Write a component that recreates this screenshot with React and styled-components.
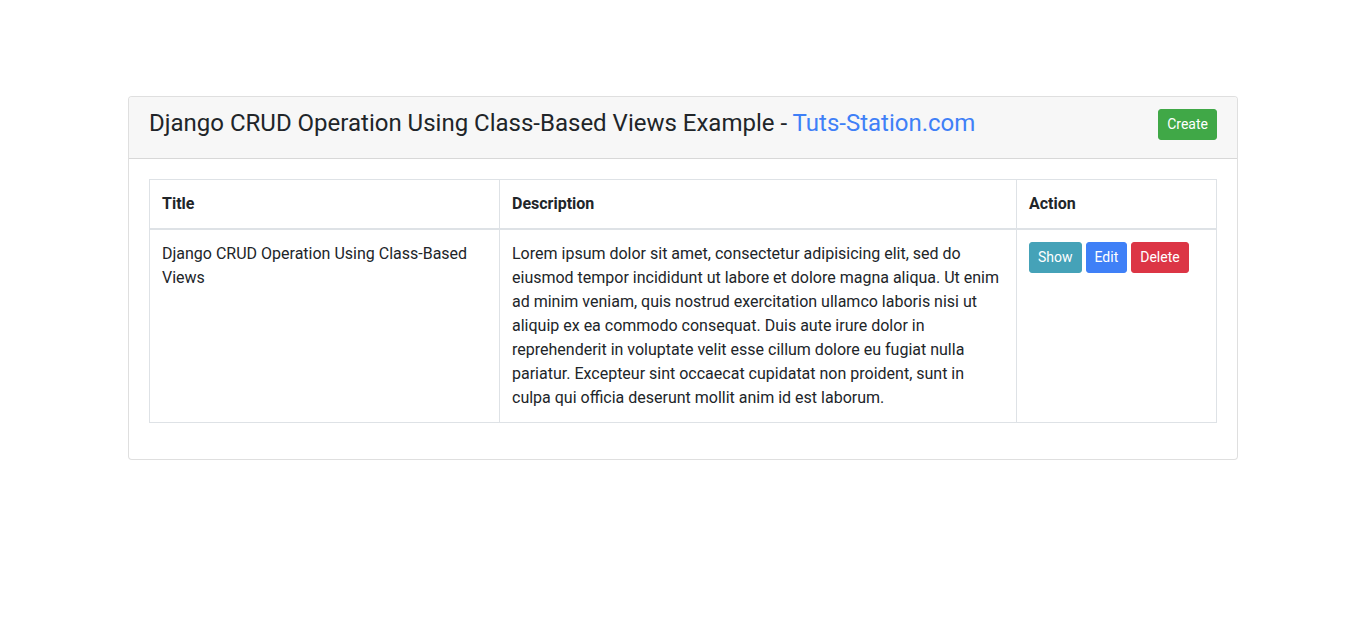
import React from 'react';
import styled, { createGlobalStyle } from 'styled-components';

const GlobalStyle = createGlobalStyle`
  * { box-sizing: border-box; }
  body {
    margin: 0;
    font-family: Roboto, "Liberation Sans", Arial, sans-serif;
    font-size: 16px;
    line-height: 1.5;
    color: #212529;
    background: #fff;
  }
`;

const Container = styled.div`
  width: 1140px;
  margin: 0 auto;
  padding: 96px 15px 0;
`;

const Card = styled.div`
  border: 1px solid rgba(0, 0, 0, 0.125);
  border-radius: 4px;
  background: #fff;
`;

const CardHeader = styled.div`
  display: flex;
  justify-content: space-between;
  align-items: flex-start;
  padding: 12px 20px;
  background: #f7f7f7;
  border-bottom: 1px solid rgba(0, 0, 0, 0.125);
  border-radius: 3px 3px 0 0;
`;

const Heading = styled.h4`
  margin: 0 0 8px;
  font-size: 24px;
  font-weight: 400;
  line-height: 1.2;
`;

const Link = styled.a`
  color: #3f80f7;
  text-decoration: none;
`;

const CardBody = styled.div`
  padding: 20px;
`;

const Table = styled.table`
  width: 100%;
  margin-bottom: 16px;
  border-collapse: collapse;
  border: 1px solid #dee2e6;
`;

const Th = styled.th`
  width: ${(p) => p.$w}px;
  padding: 12px;
  text-align: left;
  vertical-align: bottom;
  font-weight: 700;
  border: 1px solid #dee2e6;
  border-bottom-width: 2px;
`;

const Td = styled.td`
  padding: 12px;
  vertical-align: top;
  border: 1px solid #dee2e6;
`;

const colors = {
  success: '#40a847',
  info: '#45a2b8',
  primary: '#3f80f7',
  danger: '#dc3545',
};

const Button = styled.a`
  display: inline-block;
  padding: 4px 8px;
  font-size: 14px;
  line-height: 1.5;
  color: #fff;
  background: ${(p) => colors[p.$variant]};
  border: 1px solid ${(p) => colors[p.$variant]};
  border-radius: 3px;
  text-decoration: none;
  cursor: pointer;
`;

const Actions = styled.div`
  display: flex;
  gap: 4px;
`;

export default function App() {
  return (
    <>
      <GlobalStyle />
      <Container>
        <Card>
          <CardHeader>
            <Heading>
              Django CRUD Operation Using Class-Based Views Example - <Link href="#">Tuts-Station.com</Link>
            </Heading>
            <Button $variant="success">Create</Button>
          </CardHeader>
          <CardBody>
            <Table>
              <thead>
                <tr>
                  <Th $w={350}>Title</Th>
                  <Th $w={517}>Description</Th>
                  <Th>Action</Th>
                </tr>
              </thead>
              <tbody>
                <tr>
                  <Td>Django CRUD Operation Using Class-Based Views</Td>
                  <Td>
                    Lorem ipsum dolor sit amet, consectetur adipisicing elit, sed do eiusmod tempor incididunt ut labore et dolore magna aliqua. Ut enim ad minim veniam, quis nostrud exercitation ullamco laboris nisi ut aliquip ex ea commodo consequat. Duis aute irure dolor in reprehenderit in voluptate velit esse cillum dolore eu fugiat nulla pariatur. Excepteur sint occaecat cupidatat non proident, sunt in culpa qui officia deserunt mollit anim id est laborum.
                  </Td>
                  <Td>
                    <Actions>
                      <Button $variant="info">Show</Button>
                      <Button $variant="primary">Edit</Button>
                      <Button $variant="danger">Delete</Button>
                    </Actions>
                  </Td>
                </tr>
              </tbody>
            </Table>
          </CardBody>
        </Card>
      </Container>
    </>
  );
}
